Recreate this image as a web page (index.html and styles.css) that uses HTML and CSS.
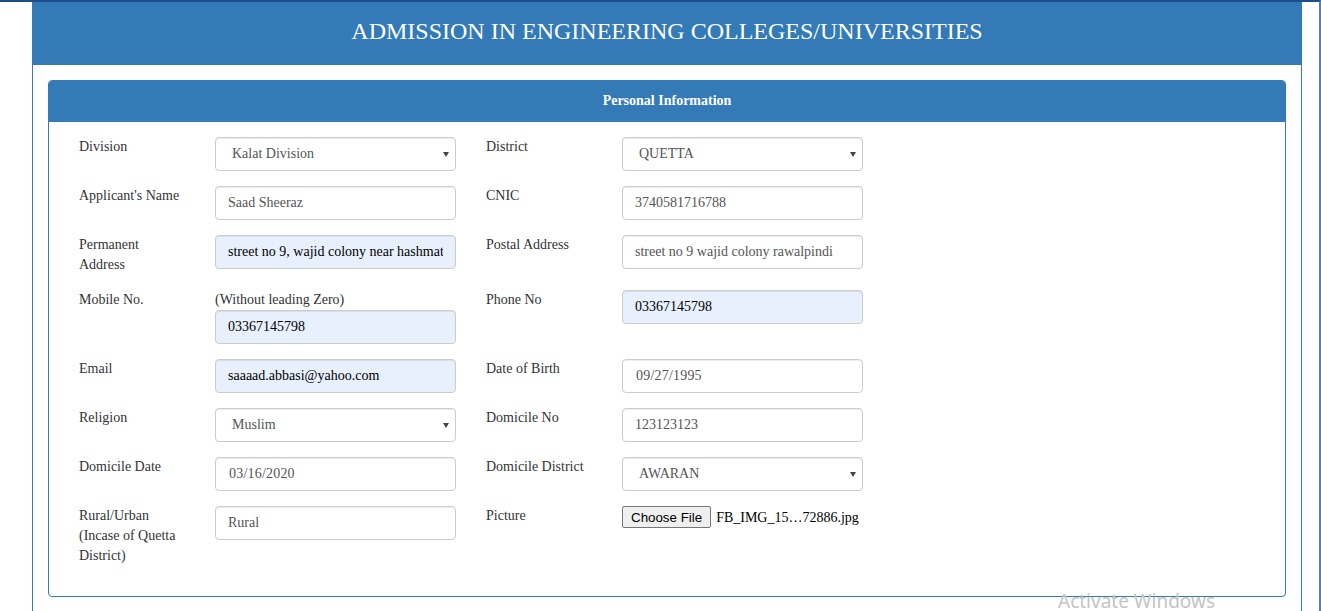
FILE: index.html
```html
<!DOCTYPE html>
<html lang="en">
<head>
<meta charset="utf-8">
<title>Admission in Engineering Colleges/Universities</title>
<link rel="stylesheet" href="styles.css">
</head>
<body>
<div class="container">
  <header class="banner">
    <h1 class="banner-title">ADMISSION IN ENGINEERING COLLEGES/UNIVERSITIES</h1>
  </header>
  <section class="panel">
    <div class="panel-heading">Personal Information</div>
    <div class="panel-body">
      <form class="form-grid">
        <label class="lbl">Division</label>
        <div class="field">
          <div class="select-wrap"><select class="control select"><option>Kalat Division</option></select></div>
        </div>
        <label class="lbl">District</label>
        <div class="field">
          <div class="select-wrap"><select class="control select"><option>QUETTA</option></select></div>
        </div>

        <label class="lbl">Applicant's Name</label>
        <div class="field"><input class="control" type="text" value="Saad Sheeraz"></div>
        <label class="lbl">CNIC</label>
        <div class="field"><input class="control" type="text" value="3740581716788"></div>

        <label class="lbl">Permanent Address</label>
        <div class="field"><input class="control autofill" type="text" value="street no 9, wajid colony near hashmat"></div>
        <label class="lbl">Postal Address</label>
        <div class="field"><input class="control" type="text" value="street no 9 wajid colony rawalpindi"></div>

        <label class="lbl">Mobile No.</label>
        <div class="field">
          <div class="hint">(Without leading Zero)</div>
          <input class="control autofill" type="text" value="03367145798">
        </div>
        <label class="lbl">Phone No</label>
        <div class="field"><input class="control autofill" type="text" value="03367145798"></div>

        <label class="lbl">Email</label>
        <div class="field"><input class="control autofill" type="text" value="saaaad.abbasi@yahoo.com"></div>
        <label class="lbl">Date of Birth</label>
        <div class="field"><input class="control date" type="text" value="09/27/1995"></div>

        <label class="lbl">Religion</label>
        <div class="field">
          <div class="select-wrap"><select class="control select"><option>Muslim</option></select></div>
        </div>
        <label class="lbl">Domicile No</label>
        <div class="field"><input class="control" type="text" value="123123123"></div>

        <label class="lbl">Domicile Date</label>
        <div class="field"><input class="control date" type="text" value="03/16/2020"></div>
        <label class="lbl">Domicile District</label>
        <div class="field">
          <div class="select-wrap"><select class="control select"><option>AWARAN</option></select></div>
        </div>

        <label class="lbl">Rural/Urban (Incase of Quetta District)</label>
        <div class="field"><input class="control" type="text" value="Rural"></div>
        <label class="lbl">Picture</label>
        <div class="field file-field">
          <button type="button" class="file-btn">Choose File</button>
          <span class="file-name">FB_IMG_15…72886.jpg</span>
        </div>
      </form>
    </div>
  </section>
</div>
<div class="activate">Activate Windows</div>
</body>
</html>
```

FILE: styles.css
```css
html {
  height: 100%;
}

body {
  margin: 0;
  height: 100%;
  box-sizing: border-box;
  border-top: 2px solid #1d4e8b;
  border-right: 2px solid #4f80b8;
  overflow: hidden;
  background: #fff;
  font-family: "Liberation Serif", "Times New Roman", serif;
  font-size: 14px;
  line-height: 20px;
  color: #333;
  display: flex;
}

.container {
  margin-left: 32px;
  width: 1270px;
  box-sizing: border-box;
  border-left: 1px solid #337ab7;
  border-right: 1px solid #337ab7;
  display: flex;
  flex-direction: column;
}

.banner {
  height: 63px;
  box-sizing: border-box;
  padding-top: 14px;
  background: #337ab7;
  color: #fff;
  text-align: center;
}

.banner-title {
  margin: 0;
  font-size: 24px;
  font-weight: normal;
  line-height: 30px;
}

.panel {
  margin: 15px 15px 0;
  border: 1px solid #337ab7;
  border-radius: 4px;
}

.panel-heading {
  height: 41px;
  box-sizing: border-box;
  padding: 9px 15px 11px;
  line-height: 21px;
  background: #337ab7;
  color: #fff;
  font-weight: bold;
  text-align: center;
  border-radius: 3px 3px 0 0;
}

.panel-body {
  padding: 15px 0 30px 30px;
}

.form-grid {
  display: grid;
  grid-template-columns: 136px 271px 136px 241px;
  row-gap: 15px;
  align-items: start;
}

.lbl {
  padding-right: 32px;
  color: #333;
}

.field {
  width: 241px;
}

.hint {
  color: #333;
}

.control {
  display: block;
  width: 241px;
  height: 34px;
  box-sizing: border-box;
  margin: 0;
  padding: 6px 12px;
  font-family: inherit;
  font-size: 14px;
  line-height: 20px;
  color: #555;
  background: #fff;
  border: 1px solid #ccc;
  border-radius: 4px;
  box-shadow: inset 0 1px 1px rgba(0, 0, 0, 0.075);
  outline: none;
}

.control.autofill {
  background: #e8f0fe;
  color: #000;
}

.control.date {
  padding-left: 13px;
  letter-spacing: 0.2px;
}

.select-wrap {
  position: relative;
  width: 241px;
}

.select {
  appearance: none;
  -webkit-appearance: none;
  padding-left: 16px;
}

.select-wrap::after {
  content: "";
  position: absolute;
  right: 7px;
  top: 15px;
  border-left: 3px solid transparent;
  border-right: 3px solid transparent;
  border-top: 5px solid #444;
  pointer-events: none;
}

.file-field {
  display: flex;
  align-items: baseline;
  width: 260px;
}

.file-btn {
  height: 22px;
  box-sizing: border-box;
  padding: 0 8px;
  margin: 0;
  font-family: "Liberation Sans", Arial, sans-serif;
  font-size: 13.333px;
  color: #000;
  background: #efefef;
  border: 1px solid #767676;
  border-radius: 2px;
}

.file-name {
  margin-left: 5px;
  color: #000;
  white-space: nowrap;
}

.activate {
  position: absolute;
  left: 1058px;
  top: 592px;
  font-family: "Noto Sans", "Open Sans", sans-serif;
  font-size: 19px;
  line-height: 19px;
  color: #c4c4c4;
  white-space: nowrap;
  pointer-events: none;
}
```
